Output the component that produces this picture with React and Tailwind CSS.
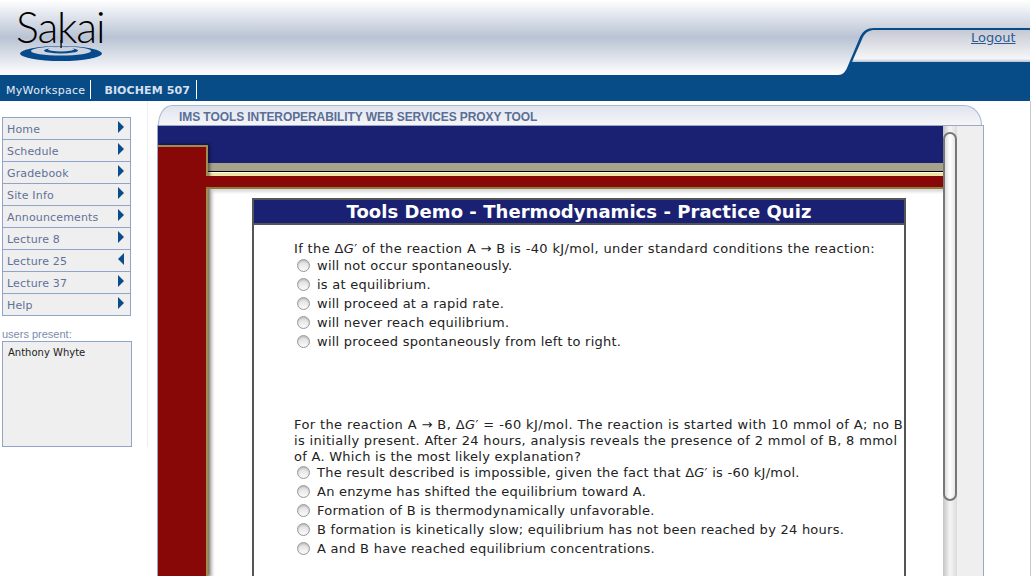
const menu = [
  ['Home', 'r'],
  ['Schedule', 'r'],
  ['Gradebook', 'r'],
  ['Site Info', 'r'],
  ['Announcements', 'r'],
  ['Lecture 8', 'r'],
  ['Lecture 25', 'l'],
  ['Lecture 37', 'r'],
  ['Help', 'r'],
];

const dG = (
  <>
    Δ<i>G</i>′
  </>
);

function Radio() {
  return (
    <span className="w-[13px] h-[13px] rounded-full border border-[#999999] bg-gradient-to-b from-[#dcdcdc] to-[#fbfbfb] shadow-[inset_0_1px_2px_rgba(0,0,0,0.2)] shrink-0" />
  );
}

function Option({ children }) {
  return (
    <div className="flex items-center h-[19px] pl-[3px] gap-[7px] tracking-[0.25px]">
      <Radio />
      <span>{children}</span>
    </div>
  );
}

function SakaiLogo() {
  return (
    <div className="relative w-[100px] h-[70px] ml-[16px] pt-[2px]">
      <span className="block text-[43px] leading-[50px] tracking-[-1.2px] text-black font-['Lato',sans-serif] font-light">Sakai</span>
      <svg className="absolute left-[3px] top-[40px]" width="84" height="22" viewBox="0 0 84 22">
        <ellipse cx="42" cy="13.5" rx="41" ry="7.5" fill="#064a8c" />
        <ellipse cx="42" cy="11" rx="30" ry="4.5" fill="#cdd4e0" />
        <ellipse cx="42" cy="10.5" rx="17" ry="3" fill="#064a8c" />
        <ellipse cx="42" cy="9.3" rx="13" ry="2.2" fill="#cdd4e0" />
        <rect x="41.4" y="0" width="1.4" height="8" fill="#111111" />
      </svg>
    </div>
  );
}

export default function App() {
  return (
    <div className="w-[1031px] h-[576px] overflow-hidden bg-white relative font-['DejaVu_Sans',Verdana,sans-serif]">
      <header className="w-[1030px] h-[75px] relative bg-gradient-to-b from-white via-[#b9c3d4] to-white">
        <SakaiLogo />
        <svg className="absolute left-[830px] top-[27px]" width="200" height="48" viewBox="0 0 200 48">
          <defs>
            <linearGradient id="logoutTab" x1="0" y1="0" x2="0" y2="1">
              <stop offset="0" stopColor="#c6c9d4" />
              <stop offset="0.6" stopColor="#e6e7ec" />
              <stop offset="0.9" stopColor="#f6f6f8" />
              <stop offset="1" stopColor="#b4c0d4" />
            </linearGradient>
          </defs>
          <path d="M0 48 H8 C13 48 15 45 17 41 L30 10 C33 4 37 1 44 1 H200 V48 Z" fill="#074b87" />
          <path d="M22 35 L33 10 C36 5 39 3 45 3 H200 V35 Z" fill="url(#logoutTab)" />
        </svg>
        <a href="#" className="absolute left-[971px] top-[30px] text-[13px] leading-[16px] text-[#2c5a94] underline">Logout</a>
      </header>

      <nav className="w-[1030px] h-[26px] bg-[#074b87] flex items-end pb-[2px] text-[11px] text-white">
        <a href="#" className="h-[19px] flex items-center pl-[6px] pr-[5px] pt-[3px] border-r border-white tracking-[0.3px] text-[#e6ecf5]">MyWorkspace</a>
        <a href="#" className="h-[19px] flex items-center pl-[13px] pr-[6px] pt-[3px] border-r border-white font-bold tracking-[0.1px] text-[#d7e0ee]">BIOCHEM 507</a>
      </nav>

      <div className="flex">
        <aside className="w-[148px] h-[346px] border-r border-[#eeeeee] pl-[2px] pt-[16px] shrink-0">
          <ul className="w-[129px] border border-[#8fa3cb] border-b-0 bg-[#efefef]">
            {menu.map(([label, dir]) => (
              <li key={label} className="h-[22px] border-b border-[#8fa3cb] flex items-center justify-between pl-[4px] pr-[6px] pt-[4px] text-[11px] text-[#5f7199]">
                <span className="tracking-[0.15px]">{label}</span>
                <svg width="6" height="12" viewBox="0 0 6 12" className="mb-[7px]">
                  <path d={dir === 'r' ? 'M0 0 L6 6 L0 12 Z' : 'M6 0 L0 6 L6 12 Z'} fill="#0a4c8c" />
                </svg>
              </li>
            ))}
          </ul>
          <p className="mt-[12px] text-[11px] leading-[12px] text-[#7a8cab] font-['Liberation_Sans',sans-serif]">users present:</p>
          <div className="mt-[1px] w-[130px] h-[106px] border border-[#8fa3cb] bg-[#efefef] px-[5px] pt-[4px] text-[10px] leading-[14px] text-[#222222]">Anthony Whyte</div>
        </aside>

        <main className="ml-[9px] w-[827px] shrink-0 pt-[4px]">
          <div className="h-[20px] ml-[1px] w-[824px] bg-gradient-to-b from-[#dfe4ee] to-[#f6f6f8] border-t border-x border-[#a9b8d4] rounded-tl-[14px_20px] rounded-tr-[18px_20px] pl-[20px] pt-[3px] text-[12px] leading-[17px] font-bold tracking-[-0.08px] text-[#5a6e96] font-['Liberation_Sans',sans-serif]">
            IMS TOOLS INTEROPERABILITY WEB SERVICES PROXY TOOL
          </div>
          <div className="flex h-[451px] border-t border-r border-[#9aa9c8]">
            <div className="w-[786px] shrink-0 border-l border-[#9aa9c8] overflow-hidden">
              <div className="h-[19px] bg-[#1a2172]" />
              <div className="flex h-[432px]">
                <div className="w-[50px] bg-[#880808] border-t-2 border-r-2 border-[#a08c4e] shadow-[2px_-1px_3px_rgba(0,0,0,0.45)] relative shrink-0" />
                <div className="flex-1 flex flex-col min-w-0">
                  <div className="h-[18px] bg-[#1a2172] shrink-0" />
                  <div className="h-[8px] bg-[#a5a38a] shrink-0" />
                  <div className="h-[1px] bg-black shrink-0" />
                  <div className="h-[1px] bg-[#ffffff] shrink-0" />
                  <div className="h-[3px] bg-[#f1e49a] shrink-0" />
                  <div className="h-[13px] -ml-[2px] relative bg-[#880808] border-b-2 border-[#8f7c3e] shrink-0" />
                  <div className="flex-1 bg-white pl-[42px] pt-[9px] border-l-2 border-[#d4cfb8] shadow-[inset_3px_3px_3px_rgba(0,0,0,0.15)]">
                    <section className="w-[654px] h-[400px] border-2 border-b-0 border-[#555555] text-[13px] leading-[16px] text-[#222222]">
                      <h1 className="h-[25px] bg-[#1a2172] border-b-2 border-[#555555] text-center text-white font-bold text-[18px] leading-[23px] tracking-[0.05px]">
                        Tools Demo - Thermodynamics - Practice Quiz
                      </h1>
                      <div className="pl-[40px] pt-[16px] whitespace-nowrap overflow-hidden">
                        <p className="tracking-[0.35px]">If the {dG} of the reaction A → B is -40 kJ/mol, under standard conditions the reaction:</p>
                        <div className="-mt-[1px]">
                          <Option>will not occur spontaneously.</Option>
                          <Option>is at equilibrium.</Option>
                          <Option>will proceed at a rapid rate.</Option>
                          <Option>will never reach equilibrium.</Option>
                          <Option>will proceed spontaneously from left to right.</Option>
                        </div>
                        <p className="mt-[66px] tracking-[0.39px]">For the reaction A → B, {dG} = -60 kJ/mol. The reaction is started with 10 mmol of A; no B</p>
                        <p className="tracking-[0.32px]">is initially present. After 24 hours, analysis reveals the presence of 2 mmol of B, 8 mmol</p>
                        <p className="tracking-[0.27px]">of A. Which is the most likely explanation?</p>
                        <div className="-mt-[2px]">
                          <Option>The result described is impossible, given the fact that {dG} is -60 kJ/mol.</Option>
                          <Option>An enzyme has shifted the equilibrium toward A.</Option>
                          <Option>Formation of B is thermodynamically unfavorable.</Option>
                          <Option>B formation is kinetically slow; equilibrium has not been reached by 24 hours.</Option>
                          <Option>A and B have reached equilibrium concentrations.</Option>
                        </div>
                      </div>
                    </section>
                  </div>
                </div>
              </div>
            </div>
            <div className="w-[14px] shrink-0 bg-gradient-to-r from-[#c4c4c4] via-[#f5f5f5] to-[#dcdcdc] pt-[6px]">
              <div className="h-[369px] rounded-full border-2 border-[#777777] bg-gradient-to-r from-[#dddddd] via-[#ffffff] to-[#e8e8e8]" />
            </div>
            <div className="flex-1 bg-[#efefef]" />
          </div>
        </main>
      </div>
      <div className="absolute right-0 top-[101px] bottom-0 w-px bg-[#cccccc]" />
    </div>
  );
}
